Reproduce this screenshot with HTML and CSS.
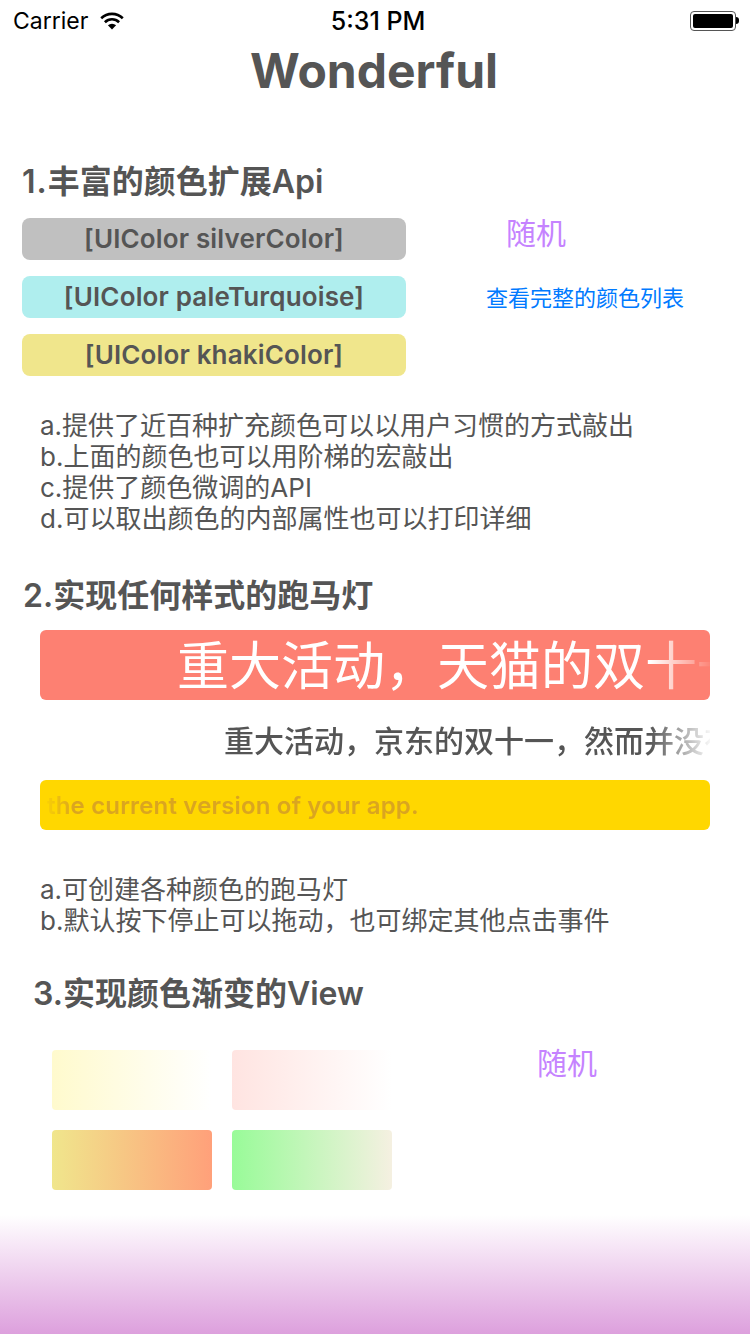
FILE: index.html
```html
<!DOCTYPE html>
<html lang="zh">
   <head>
      <meta charset="utf-8">
      <meta name="viewport" content="width=device-width, initial-scale=1">
      <title>Wonderful</title>
      <link rel="stylesheet" href="styles.css">
   </head>
   <body>
      <div class="status">
         <div class="status-left">
            <span>Carrier</span>
            <svg class="wifi" width="26" height="18" viewBox="0 0 26 18">
               <path d="M13 17.5 L8.9 13.3 A6 6 0 0 1 17.1 13.3 Z" fill="#000"/>
               <path d="M5.9 10.2 A10.2 10.2 0 0 1 20.1 10.2" fill="none" stroke="#000" stroke-width="2.6"/>
               <path d="M2.2 6.2 A15.6 15.6 0 0 1 23.8 6.2" fill="none" stroke="#000" stroke-width="2.6"/>
            </svg>
         </div>
         <div class="status-time">5:31 PM</div>
         <div class="status-right">
            <div class="battery"><div class="battery-fill"></div></div>
            <div class="battery-tip"></div>
         </div>
      </div>

      <h1 class="title">Wonderful</h1>

      <h2 class="heading"><span class="num-one">1.</span>丰富的颜色扩展Api</h2>
      <div class="color-row">
         <div class="color-list">
            <div class="color-btn silver">[UIColor silverColor]</div>
            <div class="color-btn turquoise">[UIColor paleTurquoise]</div>
            <div class="color-btn khaki">[UIColor khakiColor]</div>
         </div>
         <div class="color-side">
            <a class="random">随机</a>
            <a class="full-list">查看完整的颜色列表</a>
         </div>
      </div>
      <p class="notes notes-first">a.提供了近百种扩充颜色可以以用户习惯的方式敲出<br>b.上面的颜色也可以用阶梯的宏敲出<br>c.提供了颜色微调的API<br>d.可以取出颜色的内部属性也可以打印详细</p>

      <h2 class="heading heading-two">2.实现任何样式的跑马灯</h2>
      <div class="marquee marquee-red"><span class="fade-right">重大活动&#xFF0C;天猫的双十一</span></div>
      <div class="marquee marquee-plain"><span class="fade-right">重大活动&#xFF0C;京东的双十一&#xFF0C;然而并没有</span></div>
      <div class="marquee marquee-gold"><span class="fade-left">the current version of your app.</span></div>
      <p class="notes notes-second">a.可创建各种颜色的跑马灯<br>b.默认按下停止可以拖动&#xFF0C;也可绑定其他点击事件</p>

      <h2 class="heading heading-three">3.实现颜色渐变的View</h2>
      <div class="gradient-row">
         <div class="gradient-grid">
            <div class="box box-lemon"></div>
            <div class="box box-rose"></div>
            <div class="box box-salmon"></div>
            <div class="box box-green"></div>
         </div>
         <a class="random random-low">随机</a>
      </div>

      <div class="bottom-fade"></div>
   </body>
</html>
```

FILE: styles.css
```css
* {
   box-sizing: border-box;
}
html, body {
   margin: 0;
   height: 100%;
}
body {
   display: flex;
   flex-direction: column;
   min-height: 1334px;
   background-color: #fff;
   color: #555;
   font-family: Inter, "Noto Sans CJK SC", sans-serif;
   overflow: hidden;
}

.status {
   display: flex;
   align-items: center;
   justify-content: space-between;
   height: 40px;
   padding: 1px 11px 0 13px;
   color: #000;
   font-size: 23px;
}
.status-left, .status-right {
   display: flex;
   align-items: center;
}
.status-left {
   gap: 11px;
   width: 204px;
}
.status-right {
   justify-content: flex-end;
   width: 200px;
}
.status-time {
   font-size: 25px;
   font-weight: 500;
}
.battery {
   width: 46px;
   height: 20px;
   padding: 2px;
   border: 1px solid #555;
   border-radius: 4px;
}
.battery-fill {
   height: 100%;
   background-color: #000;
   border-radius: 2px;
}
.battery-tip {
   width: 3px;
   height: 7px;
   background-color: #000;
   border-radius: 0 3px 3px 0;
}

.title {
   margin: 0;
   height: 60px;
   padding-right: 2px;
   line-height: 61px;
   font-size: 48px;
   font-weight: 700;
   text-align: center;
}

.heading {
   margin: 61px 0 0 22px;
   height: 40px;
   line-height: 41px;
   font-size: 32px;
   font-weight: 600;
}
.num-one {
   letter-spacing: 1px;
}
.heading-two {
   margin: 41px 0 0 23px;
}
.heading-three {
   margin: 37px 0 0 33px;
}

.color-row {
   display: flex;
   margin-top: 17px;
   margin-left: 22px;
}
.color-list {
   display: flex;
   flex-direction: column;
   gap: 16px;
   width: 384px;
}
.color-btn {
   height: 42px;
   line-height: 42px;
   border-radius: 8px;
   font-size: 26px;
   font-weight: 600;
   letter-spacing: 0.15px;
   text-align: center;
}
.silver {
   background-color: #c0c0c0;
}
.turquoise {
   background-color: #afeeee;
}
.khaki {
   background-color: #f0e68c;
}
.color-side {
   display: flex;
   flex-direction: column;
   align-items: flex-start;
}
.random {
   color: #c583ff;
   font-size: 30px;
   line-height: 40px;
}
.color-side .random {
   margin-left: 100px;
   margin-top: -5px;
}
.full-list {
   margin-top: 25px;
   margin-left: 80px;
   color: #007aff;
   font-size: 22px;
   line-height: 40px;
}

.notes {
   margin: 34px 0 0 40px;
   font-size: 26px;
   line-height: 31px;
}
.notes-second {
   margin-top: 44px;
}

.marquee {
   display: flex;
   align-items: center;
   width: 670px;
   margin-left: 40px;
   overflow: hidden;
   white-space: nowrap;
   border-radius: 6px;
}
.marquee span {
   display: block;
   flex: none;
}
.marquee-red {
   height: 70px;
   margin-top: 15px;
   padding: 0 0 6px 137px;
   background-color: #fd8072;
   color: #fff;
   font-size: 52px;
}
.marquee-red .fade-right {
   width: 533px;
   overflow: hidden;
}
.marquee-plain {
   height: 40px;
   margin-top: 21px;
   padding: 0 0 4px 184px;
   font-size: 30px;
   font-weight: 500;
}
.marquee-plain .fade-right {
   width: 486px;
   overflow: hidden;
}
.fade-right {
   -webkit-mask-image: linear-gradient(to left, rgba(0, 0, 0, 0.05) 0, #000 60px);
   mask-image: linear-gradient(to left, rgba(0, 0, 0, 0.05) 0, #000 60px);
}
.marquee-gold {
   height: 50px;
   margin-top: 19px;
   padding-left: 7px;
   background-color: #ffd700;
   color: #daa520;
   font-size: 24px;
   font-weight: 600;
   letter-spacing: 0.17px;
}
.fade-left {
   -webkit-mask-image: linear-gradient(to right, rgba(0, 0, 0, 0.15) 0, #000 26px);
   mask-image: linear-gradient(to right, rgba(0, 0, 0, 0.15) 0, #000 26px);
}

.gradient-row {
   display: flex;
   align-items: flex-start;
   margin: 37px 0 0 52px;
}
.gradient-grid {
   display: grid;
   grid-template-columns: 160px 160px;
   grid-auto-rows: 60px;
   gap: 20px;
}
.box {
   border-radius: 4px;
}
.box-lemon {
   background: linear-gradient(to right, #fffacd, #fff);
}
.box-rose {
   background: linear-gradient(to right, #ffe4e1, #fff);
}
.box-salmon {
   background: linear-gradient(to right, #f0e68c, #ffa07a);
}
.box-green {
   background: linear-gradient(to right, #98fb98, #f5f0e1);
}
.random-low {
   margin-left: 145px;
   margin-top: -7px;
}

.bottom-fade {
   flex: none;
   height: 119px;
   margin-top: auto;
   background: linear-gradient(to bottom, #fff, #dda0dd);
}
```
